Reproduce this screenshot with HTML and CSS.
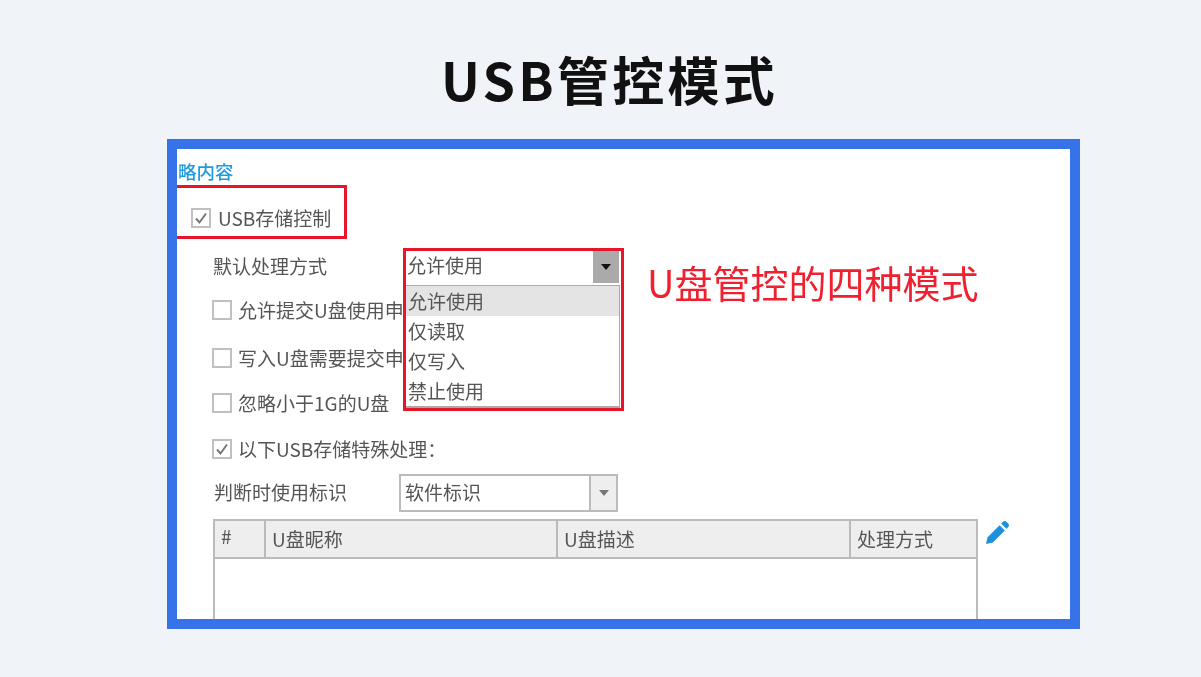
FILE: index.html
```html
<!DOCTYPE html>
<html lang="zh-CN">
<head>
    <meta charset="UTF-8">
    <title>USB管控模式</title>
    <link rel="stylesheet" href="styles.css">
</head>
<body>
    <h1 class="title">USB管控模式</h1>

    <div class="frame">
        <div class="section-name">略内容</div>

        <!-- USB存储控制 -->
        <div class="usb-box">
            <label class="check-row">
                <span class="checkbox"><svg viewBox="0 0 16 16"><path d="M3 8.5 L6.5 12.5 L13 3.5" /></svg></span>
                <span class="check-text">USB存储控制</span>
            </label>
        </div>

        <div class="field-row field-mode">
            <span class="field-label">默认处理方式</span>
            <div class="combo-open">
                <div class="combo-value">允许使用</div>
                <div class="combo-arrow dark"><i></i></div>
                <ul class="combo-list">
                    <li class="active">允许使用</li>
                    <li>仅读取</li>
                    <li>仅写入</li>
                    <li>禁止使用</li>
                </ul>
                <div class="red-mark"></div>
            </div>
        </div>
        <div class="callout">U盘管控的四种模式</div>

        <label class="check-row sub row-a">
            <span class="checkbox"></span>
            <span class="check-text">允许提交U盘使用申</span>
        </label>
        <label class="check-row sub row-b">
            <span class="checkbox"></span>
            <span class="check-text">写入U盘需要提交申</span>
        </label>
        <label class="check-row sub row-c">
            <span class="checkbox"></span>
            <span class="check-text">忽略小于1G的U盘</span>
        </label>
        <label class="check-row sub row-d">
            <span class="checkbox"><svg viewBox="0 0 16 16"><path d="M3 8.5 L6.5 12.5 L13 3.5" /></svg></span>
            <span class="check-text">以下USB存储特殊处理：</span>
        </label>

        <div class="field-row field-id">
            <span class="field-label">判断时使用标识</span>
            <div class="combo">
                <div class="combo-value">软件标识</div>
                <div class="combo-arrow"><i></i></div>
            </div>
        </div>

        <div class="table-row">
            <table class="usb-table">
                <colgroup>
                    <col class="col-no">
                    <col class="col-name">
                    <col class="col-desc">
                    <col>
                </colgroup>
                <thead>
                    <tr>
                        <th class="th-no">#</th>
                        <th>U盘昵称</th>
                        <th>U盘描述</th>
                        <th>处理方式</th>
                    </tr>
                </thead>
                <tbody>
                    <tr><td colspan="4"></td></tr>
                </tbody>
            </table>
            <svg class="edit-icon" viewBox="0 0 23 23">
                <path d="M0 23 L1.6 16.2 L13.6 4.2 L18.8 9.4 L6.8 21.4 Z" />
                <path d="M15.2 2.6 L17 0.8 C18 -0.2 19.4 -0.2 20.4 0.8 L22.2 2.6 C23.2 3.6 23.2 5 22.2 6 L20.4 7.8 Z" />
            </svg>
        </div>
    </div>
</body>
</html>
```

FILE: styles.css
```css
body {
    font-family: "Noto Sans CJK SC", "Noto Sans", sans-serif;
    margin: 0;
    height: 677px;
    overflow: hidden;
    background-color: #f0f3f8;
    color: #555;
}

.title {
    margin: 0;
    height: 139px;
    padding: 41px 0 0 18px;
    box-sizing: border-box;
    text-align: center;
    font-size: 52px;
    letter-spacing: 3.3px;
    line-height: 76px;
    font-weight: 700;
    color: #111;
}

.frame {
    position: relative;
    width: 913px;
    height: 490px;
    margin-left: 167px;
    box-sizing: border-box;
    border: 10px solid #3673e8;
    background: #fff;
    overflow: hidden;
    font-size: 19px;
    filter: blur(0.35px);
}

.section-name {
    height: 36px;
    padding-left: 1px;
    font-size: 18.5px;
    line-height: 44px;
    color: #1e9ae0;
    font-weight: 500;
}

.usb-box {
    width: 170px;
    height: 54px;
    box-sizing: border-box;
    border: 3px solid #e8142a;
    border-left: none;
    padding: 15px 0 0 14px;
}

.check-row {
    display: flex;
    align-items: center;
    gap: 7px;
    height: 30px;
    white-space: nowrap;
}

.check-text {
    padding-bottom: 2px;
}

.sub {
    padding-left: 35px;
}

.sub.check-row {
    gap: 6px;
}

.row-a { margin-top: 11px; }
.row-b { margin-top: 18px; }
.row-c { margin-top: 15px; }
.row-d { margin-top: 16px; }

.checkbox {
    width: 20px;
    height: 20px;
    box-sizing: border-box;
    border: 2px solid #c0c0c0;
    background: #fff;
    flex: none;
}

.checkbox svg {
    display: block;
    width: 16px;
    height: 16px;
    fill: none;
    stroke: #777;
    stroke-width: 2;
}

.field-row {
    display: flex;
    align-items: center;
    padding-left: 36px;
}

.field-mode {
    margin-top: 10px;
    height: 35px;
}

.field-id {
    margin-top: 10px;
    height: 38px;
}

.field-label {
    white-space: nowrap;
}

.field-mode .field-label {
    width: 192px;
    padding-bottom: 2px;
}

.field-id .field-label {
    width: 185px;
    padding: 0 0 3px 1px;
}

.combo-open {
    position: relative;
    display: flex;
    width: 215px;
    height: 33px;
    z-index: 2;
    background: #fff;
}

.combo {
    display: flex;
    width: 219px;
    height: 38px;
    box-sizing: border-box;
    border: 2px solid #bbb;
}

.combo-value {
    flex: 1;
    padding-left: 2px;
    line-height: 29px;
}

.combo .combo-value {
    line-height: 32px;
    padding-left: 4px;
}

.combo-arrow {
    width: 25px;
    display: flex;
    align-items: center;
    justify-content: center;
    background: #eee;
    border-left: 2px solid #bbb;
}

.combo-arrow.dark {
    background: #aaa;
    border-left: none;
    width: 26px;
    margin-right: 1px;
}

.combo-arrow i {
    border-left: 5px solid transparent;
    border-right: 5px solid transparent;
    border-top: 6px solid #777;
}

.combo-arrow.dark i {
    border-top-color: #111;
}

.combo-list {
    position: absolute;
    left: 0;
    top: 35px;
    width: 215px;
    height: 123px;
    box-sizing: border-box;
    margin: 0;
    padding: 0;
    list-style: none;
    border: 1px solid #aaa;
    border-bottom-width: 2px;
    background: #fff;
}

.combo-list li {
    height: 30px;
    padding-left: 2px;
    line-height: 29px;
}

.combo-list li.active {
    background: #e4e4e4;
}

.red-mark {
    position: absolute;
    left: -2px;
    top: -2px;
    width: 221px;
    height: 163px;
    box-sizing: border-box;
    border: 3px solid #e8142a;
}

.callout {
    position: absolute;
    left: 470px;
    top: 106px;
    font-size: 38px;
    line-height: 54px;
    color: #f0202f;
    white-space: nowrap;
}

.table-row {
    display: flex;
    align-items: flex-start;
    gap: 8px;
    margin-top: 7px;
    padding-left: 36px;
}

.usb-table {
    width: 765px;
    table-layout: fixed;
    border-collapse: collapse;
    border: 2px solid #bbb;
    flex: none;
}

.col-no { width: 51px; }
.col-name { width: 292px; }
.col-desc { width: 293px; }

.usb-table th {
    height: 38px;
    padding: 0 0 2px 6px;
    box-sizing: border-box;
    background: #eee;
    border: 2px solid #bbb;
    text-align: left;
    font-weight: 400;
}

.usb-table th.th-no {
    vertical-align: top;
    line-height: 30px;
}

.usb-table td {
    height: 120px;
    padding: 0;
}

.edit-icon {
    width: 23px;
    height: 23px;
    margin-top: 2px;
    fill: #1e8fdc;
    flex: none;
}
```
